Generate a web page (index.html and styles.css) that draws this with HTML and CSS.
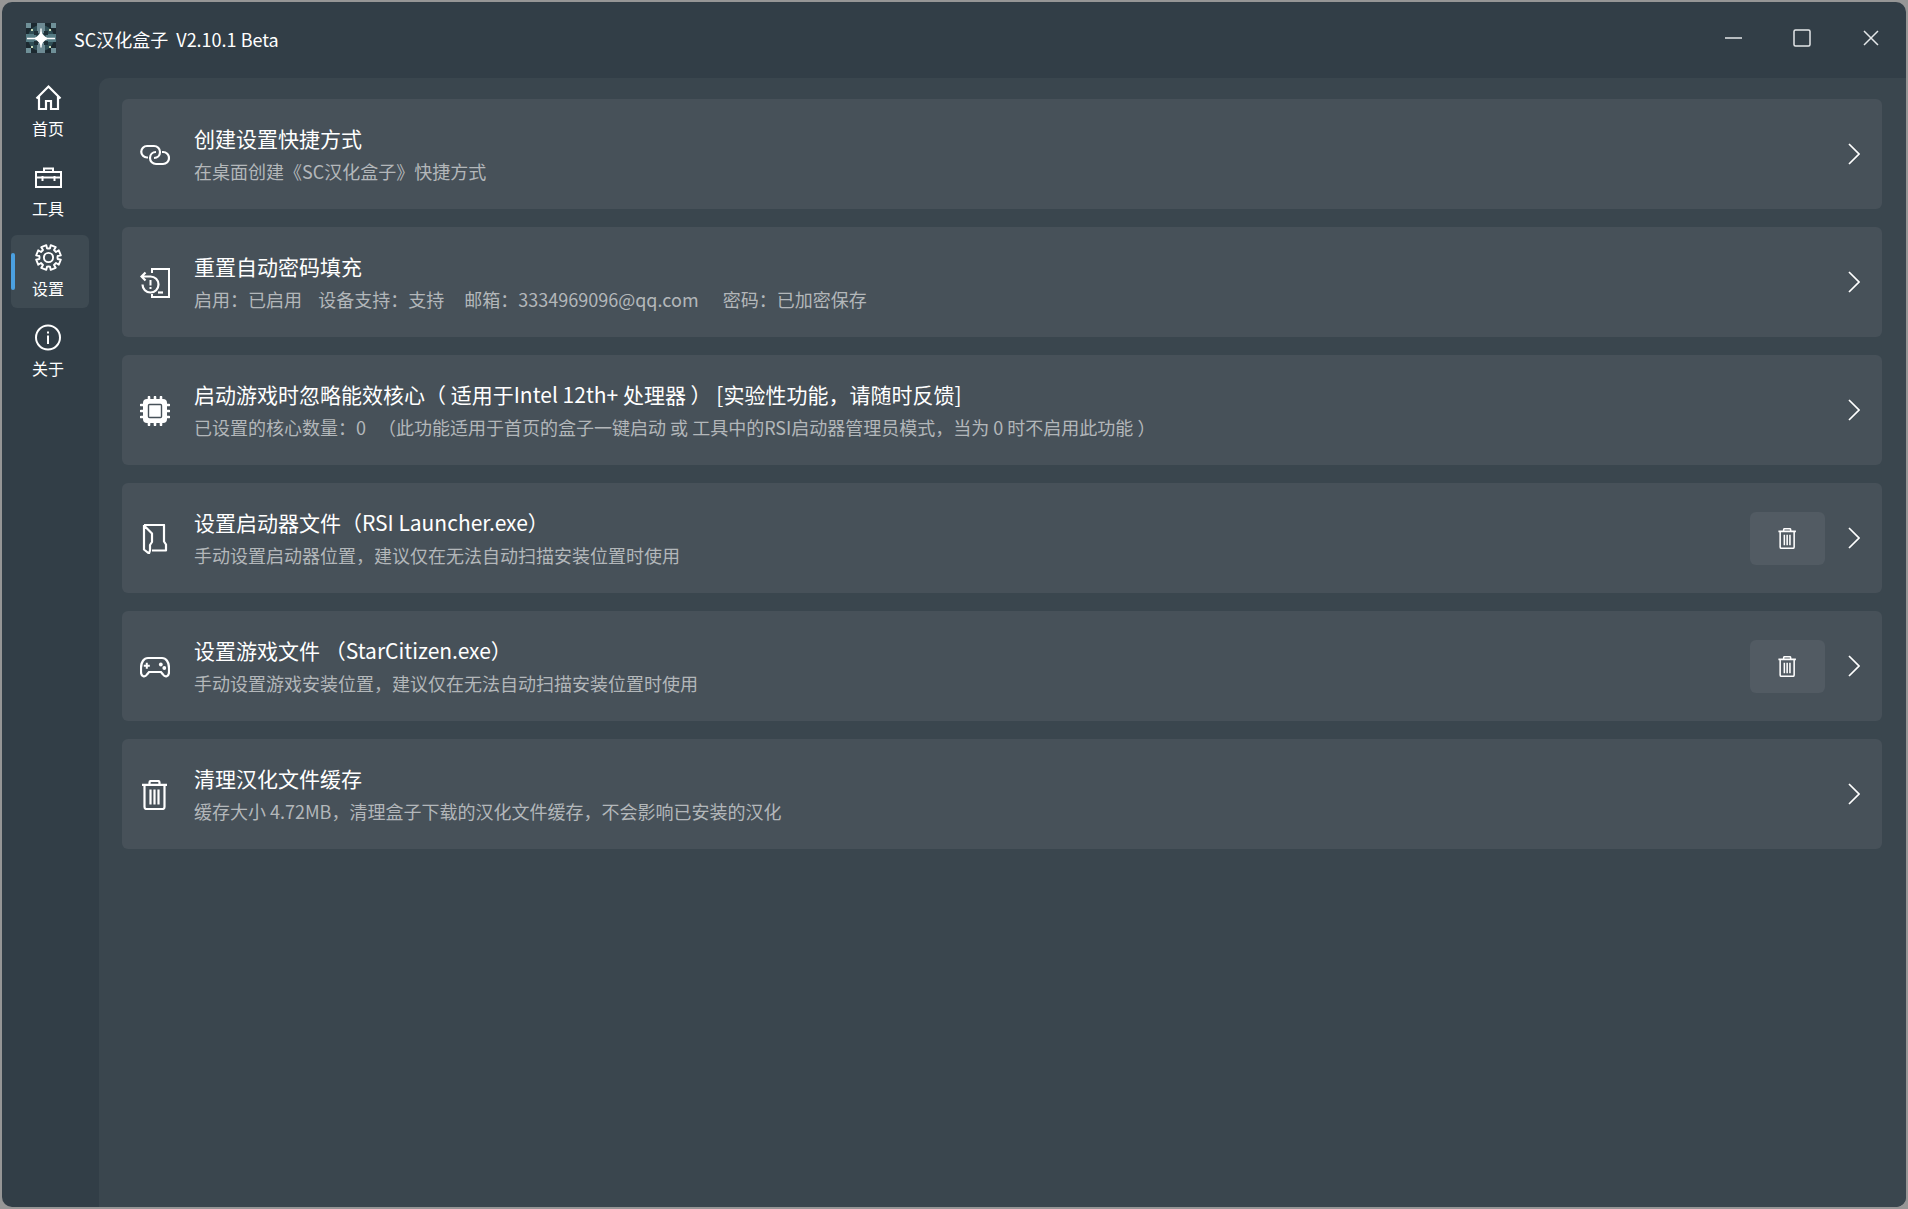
FILE: index.html
```html
<!DOCTYPE html>
<html lang="zh-CN">
<head>
<meta charset="utf-8">
<title>SC汉化盒子</title>
<link rel="stylesheet" href="styles.css">
</head>
<body>
<svg class="sprite" aria-hidden="true">
  <symbol id="chevron" viewBox="0 0 12 22"><path d="M1 1l10 10L1 21" fill="none" stroke="currentColor" stroke-width="1.700"/></symbol>
  <symbol id="trash" viewBox="0 0 30 30">
    <path d="M2 4.800h25M9.500 4.500V2.500a1.500 1.500 0 0 1 1.500-1.500h7a1.500 1.500 0 0 1 1.500 1.500v2M4.500 5v22a2 2 0 0 0 2 2h16a2 2 0 0 0 2-2V5M10.500 9.500v15M14.500 9.500v15M18.500 9.500v15" fill="none" stroke="currentColor" stroke-width="2.200"/>
  </symbol>
</svg>
<div class="window">
  <header class="titlebar">
    <svg class="logo" viewBox="0 0 30 30" aria-hidden="true">
      <rect width="30" height="30" rx="1" fill="#1c2930"/>
      <path d="M0 0h5v5H0zM25 0h5v5h-5zM0 25h5v5H0zM25 25h5v5h-5z" fill="#6f9098"/>
      <circle cx="15" cy="15" r="13" fill="#2f4e55"/>
      <path d="M11 0h8v10h-8zM11 20h8v10h-8z" fill="#6d8a93"/>
      <path d="M0 11h10v8H0zM20 11h10v8H20z" fill="#557b83"/>
      <path d="M8 8h4v4H8zM18 8h4v4h-4zM8 18h4v4H8zM18 18h4v4h-4z" fill="#1f3138"/>
      <path d="M1 15.500h28M15 5.500v19" stroke="#fff" stroke-width="1.400"/>
      <path d="M15 8l2 3.500 1.500 1.500 3.500 2.500-3.500 2.500-1.500 1.500L15 23l-2-3.500-1.500-1.500L8 15.500l3.500-2.500 1.500-1.500z" fill="#fff"/>
      <path d="M5 6h2v2H5zM23 6h2v2h-2zM5 23h2v2H5zM23 23h2v2h-2z" fill="#c9dcb8"/>
    </svg>
    <h1 class="title">SC汉化盒子  V2.10.1 Beta</h1>
    <div class="controls">
      <button type="button" aria-label="最小化"><svg viewBox="0 0 18 18"><path d="M1 9h17" fill="none" stroke="currentColor" stroke-width="1.700"/></svg></button>
      <button type="button" aria-label="最大化"><svg viewBox="0 0 18 18"><rect x="1" y="1" width="16" height="16" rx="1.500" fill="none" stroke="currentColor" stroke-width="1.500"/></svg></button>
      <button type="button" aria-label="关闭"><svg viewBox="0 0 18 18"><path d="M2 2l14 14M16 2L2 16" fill="none" stroke="currentColor" stroke-width="1.500"/></svg></button>
    </div>
  </header>
  <div class="body">
    <nav class="nav">
      <a href="#home"><svg viewBox="0 0 27 27"><path d="M1.500 14.500L13.500 2.500l12 12M4 12.500v12.500h7v-8h5v8h7V12.500" fill="none" stroke="currentColor" stroke-width="2.200"/></svg><span>首页</span></a>
      <a href="#tools"><svg viewBox="0 0 27 27"><path d="M1 8h25v15H1zM9 8V4.500h9V8M1 13.500h25M7.500 12v5M19.500 12v5" fill="none" stroke="currentColor" stroke-width="2"/></svg><span>工具</span></a>
      <a href="#settings" class="active" aria-current="page"><svg viewBox="0 0 27 27"><path d="M11.300 1.200L12 4.300Q13.500 4.700 15 4.300L15.700 1.200L20.700 3.200L19 6L21 8L23.800 6.300L25.800 11.300L22.700 12Q22.300 13.500 22.700 15L25.800 15.700L23.800 20.700L21 19L19 21L20.700 23.800L15.700 25.800L15 22.700Q13.500 22.300 12 22.700L11.300 25.800L6.300 23.800L8 21L6 19L3.200 20.700L1.200 15.700L4.300 15Q4.700 13.500 4.300 12L1.200 11.300L3.200 6.300L6 8L8 6L6.300 3.200Z" fill="none" stroke="currentColor" stroke-width="1.900" stroke-linejoin="round"/><circle cx="13.500" cy="13.500" r="4.600" fill="none" stroke="currentColor" stroke-width="1.900"/></svg><span>设置</span></a>
      <a href="#about"><svg viewBox="0 0 27 27"><circle cx="13" cy="13.500" r="12" fill="none" stroke="currentColor" stroke-width="2"/><path d="M13 11.500v8.500M13 7.500v2" stroke="currentColor" stroke-width="2"/></svg><span>关于</span></a>
    </nav>
    <main class="panel">
      <section class="card">
        <button type="button" class="entry">
          <svg viewBox="0 0 30 30"><path d="M8 17.500H7A5.700 5.700 0 0 1 7 6h7a6 6 0 0 1 6 6c0 3.500-2.500 6-6 6M22 12h1a5.700 5.700 0 0 1 0 12h-7a6 6 0 0 1-6-6c0-3.500 2.500-6 6-6" fill="none" stroke="currentColor" stroke-width="2.200"/></svg>
          <span class="text"><span class="name">创建设置快捷方式</span><span class="note">在桌面创建《SC汉化盒子》快捷方式</span></span>
        </button>
        <button type="button" class="go" aria-label="打开"><svg><use href="#chevron"/></svg></button>
      </section>
      <section class="card">
        <button type="button" class="entry">
          <svg viewBox="0 0 30 30"><path d="M12 5V1h17v28H12v-3" fill="none" stroke="currentColor" stroke-width="2"/><path d="M18 24.500h5" stroke="currentColor" stroke-width="2.200"/><path d="M1 8.500h9.500a8 8 0 1 1-8 8M5.500 4.500l-4 4 4 4" fill="none" stroke="currentColor" stroke-width="2.200"/><path d="M10.500 12v5.500M10.500 19v2" stroke="currentColor" stroke-width="2"/></svg>
          <span class="text"><span class="name">重置自动密码填充</span><span class="note">启用：已启用    设备支持：支持     邮箱：3334969096@qq.com      密码：已加密保存</span></span>
        </button>
        <button type="button" class="go" aria-label="打开"><svg><use href="#chevron"/></svg></button>
      </section>
      <section class="card">
        <button type="button" class="entry">
          <svg viewBox="0 0 30 30"><rect x="3" y="3" width="24" height="24" rx="4" fill="currentColor"/><path d="M9 1v28M15 1v28M21 1v28M1 9h28M1 15h28M1 21h28" stroke="currentColor" stroke-width="2.600" stroke-linecap="round"/><rect x="8.500" y="8.500" width="13" height="13" rx="1" fill="currentColor" stroke="#475159" stroke-width="1.400"/></svg>
          <span class="text"><span class="name">启动游戏时忽略能效核心（ 适用于Intel 12th+ 处理器 ） [实验性功能，请随时反馈]</span><span class="note">已设置的核心数量：0   （此功能适用于首页的盒子一键启动 或 工具中的RSI启动器管理员模式，当为 0 时不启用此功能 ）</span></span>
        </button>
        <button type="button" class="go" aria-label="打开"><svg><use href="#chevron"/></svg></button>
      </section>
      <section class="card">
        <button type="button" class="entry">
          <svg viewBox="0 0 30 30"><path d="M4 1h20v16.500l2 3v6H12M4 1v24.500l5 4 1-3V21l2-3V9.500L4 1.500" fill="none" stroke="currentColor" stroke-width="2.200" stroke-linejoin="round"/></svg>
          <span class="text"><span class="name">设置启动器文件（RSI Launcher.exe）</span><span class="note">手动设置启动器位置，建议仅在无法自动扫描安装位置时使用</span></span>
        </button>
        <button type="button" class="clear" aria-label="清除"><svg><use href="#trash"/></svg></button>
        <button type="button" class="go" aria-label="打开"><svg><use href="#chevron"/></svg></button>
      </section>
      <section class="card">
        <button type="button" class="entry">
          <svg viewBox="0 0 30 30"><path d="M8 6h14c4 0 7 4 7 10v4c0 5-4 5.500-6 2.500l-2-2.500H9l-2 2.500c-2 3-6 2.500-6-2.500v-4C1 10 4 6 8 6z" fill="none" stroke="currentColor" stroke-width="2.200"/><path d="M3.800 13.800h6M6.800 10.800v6" stroke="currentColor" stroke-width="2"/><circle cx="20.800" cy="12.500" r="1.900" fill="currentColor"/><circle cx="24.300" cy="16" r="1.900" fill="currentColor"/></svg>
          <span class="text"><span class="name">设置游戏文件 （StarCitizen.exe）</span><span class="note">手动设置游戏安装位置，建议仅在无法自动扫描安装位置时使用</span></span>
        </button>
        <button type="button" class="clear" aria-label="清除"><svg><use href="#trash"/></svg></button>
        <button type="button" class="go" aria-label="打开"><svg><use href="#chevron"/></svg></button>
      </section>
      <section class="card">
        <button type="button" class="entry">
          <svg><use href="#trash"/></svg>
          <span class="text"><span class="name">清理汉化文件缓存</span><span class="note">缓存大小 4.72MB，清理盒子下载的汉化文件缓存，不会影响已安装的汉化</span></span>
        </button>
        <button type="button" class="go" aria-label="打开"><svg><use href="#chevron"/></svg></button>
      </section>
    </main>
  </div>
</div>
</body>
</html>
```
FILE: styles.css
```css
* { box-sizing: border-box; }

body {
  margin: 0;
  padding: 2px;
  min-height: 100vh;
  display: flex;
  background: #969696;
  color: #fff;
  font-family: "Noto Sans CJK SC", sans-serif;
  font-weight: 400;
}

button {
  margin: 0;
  padding: 0;
  border: 0;
  background: none;
  color: inherit;
  font: inherit;
  text-align: left;
}

.sprite { position: absolute; width: 0; height: 0; }

.window {
  flex: 1;
  min-width: 0;
  display: flex;
  flex-direction: column;
  border-radius: 10px;
  background: #323e47;
  overflow: hidden;
}

.titlebar {
  display: flex;
  align-items: center;
  height: 72px;
  padding: 0 1px 0 24px;
}

.logo { width: 30px; height: 30px; margin-right: 18px; }

.title {
  flex: 1;
  margin: 0;
  padding-top: 2px;
  font-size: 18px;
  font-weight: 400;
  line-height: 28px;
  white-space: pre;
}

.controls { display: flex; color: #e4e7e9; }
.controls button {
  width: 69px;
  height: 72px;
  display: flex;
  align-items: center;
  justify-content: center;
}
.controls svg { width: 18px; height: 18px; }

.body { flex: 1; display: flex; }

.nav {
  width: 97px;
  display: flex;
  flex-direction: column;
  gap: 7px;
  padding: 1px 10px 0 9px;
}
.nav a {
  position: relative;
  height: 73px;
  padding: 9px 4px 0 0;
  display: flex;
  flex-direction: column;
  align-items: center;
  gap: 5px;
  border-radius: 6px;
  color: inherit;
  font-size: 16px;
  line-height: 24px;
  text-decoration: none;
}
.nav svg { width: 27px; height: 27px; }
.nav .active { background: #3e4a52; }
.nav .active::before {
  content: "";
  position: absolute;
  left: 0;
  top: 18px;
  width: 4px;
  height: 37px;
  border-radius: 2px;
  background: #4ba0e0;
}

.panel {
  flex: 1;
  min-width: 0;
  margin-top: 4px;
  display: flex;
  flex-direction: column;
  gap: 18px;
  padding: 21px 24px 21px 23px;
  border-top-left-radius: 10px;
  background: #3a464e;
}

.card {
  display: flex;
  align-items: center;
  padding-right: 22px;
  border-radius: 6px;
  background: #475159;
}

.entry {
  flex: 1;
  min-width: 0;
  display: flex;
  align-items: center;
  gap: 24px;
  padding: 23px 0 22px 18px;
}
.entry svg { flex: none; width: 30px; height: 30px; }
.text { display: flex; flex-direction: column; white-space: pre; }
.name { font-size: 21px; line-height: 33px; }
.note { font-size: 18px; line-height: 32px; color: #b3b7ba; }

.clear {
  width: 75px;
  height: 53px;
  margin-right: 23px;
  display: flex;
  align-items: center;
  justify-content: center;
  border-radius: 6px;
  background: #525b63;
}
.clear svg { width: 21px; height: 21px; }

.go { display: flex; }
.go svg { width: 12px; height: 22px; }
```
